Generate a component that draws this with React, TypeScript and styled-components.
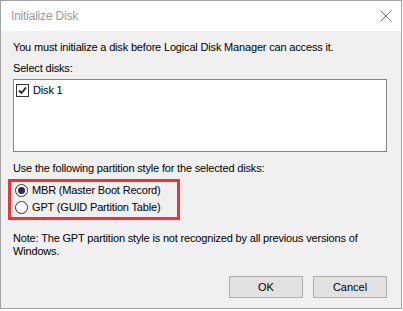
import React from "react";
import styled, { createGlobalStyle } from "styled-components";

const GlobalStyle = createGlobalStyle`
  html, body { margin: 0; padding: 0; background: #ffffff; }
  body { font-family: "Liberation Sans", Arial, sans-serif; }
`;

const Window = styled.div`
  width: 402px;
  height: 309px;
  box-sizing: border-box;
  border: 1px solid #a3a3a3;
  background: #f0f0f0;
  display: flex;
  flex-direction: column;
`;

const TitleBar = styled.div`
  height: 30px;
  flex: none;
  background: #ffffff;
  display: flex;
  align-items: center;
  justify-content: space-between;
  padding: 0 9px 0 10px;
`;

const Title = styled.span`
  font-size: 12px;
  color: #9a9a9a;
  letter-spacing: -0.2px;
`;

const Body = styled.div`
  flex: 1;
  display: flex;
  flex-direction: column;
  padding: 10px 14px 0 12px;
`;

const Text = styled.div<{ $mt?: number }>`
  font-size: 11px;
  line-height: 13px;
  color: #000;
  letter-spacing: -0.17px;
  margin-top: ${(p) => p.$mt ?? 0}px;
`;

const ListBox = styled.div`
  margin-top: 4px;
  height: 73px;
  box-sizing: border-box;
  border: 1px solid #82878f;
  background: #ffffff;
  padding: 4px 2px;
`;

const ItemRow = styled.label`
  display: flex;
  align-items: center;
  gap: 4px;
  font-size: 11px;
  line-height: 13px;
  letter-spacing: -0.17px;
`;

const CheckBox = styled.span`
  width: 11px;
  height: 11px;
  border: 1px solid #333333;
  background: #ffffff;
  display: flex;
  align-items: center;
  justify-content: center;
`;

const Highlight = styled.div`
  align-self: flex-start;
  margin: 4px 0 0 -5px;
  border: 3px solid #ec3338;
  padding: 2px 16px 3px 4px;
  display: flex;
  flex-direction: column;
  gap: 4px;
`;

const RadioRow = styled.label`
  display: flex;
  align-items: center;
  gap: 4px;
  font-size: 11px;
  line-height: 13px;
  letter-spacing: -0.17px;
`;

const Radio = styled.span<{ $on?: boolean }>`
  width: 11px;
  height: 11px;
  border-radius: 50%;
  border: 1px solid #333333;
  background: #ffffff;
  display: flex;
  align-items: center;
  justify-content: center;
  &::after {
    content: "";
    width: 7px;
    height: 7px;
    border-radius: 50%;
    background: ${(p) => (p.$on ? "#2a2a5c" : "transparent")};
  }
`;

const ButtonRow = styled.div`
  margin-top: auto;
  margin-bottom: 10px;
  display: flex;
  justify-content: flex-end;
  gap: 10px;
`;

const Button = styled.button`
  width: 74px;
  height: 22px;
  box-sizing: border-box;
  border: 1px solid #adadad;
  background: #e1e1e1;
  font-family: "Liberation Sans", Arial, sans-serif;
  font-size: 11px;
  color: #000;
  padding: 0;
`;

export default function App() {
  return (
    <>
      <GlobalStyle />
      <Window>
        <TitleBar>
          <Title>Initialize Disk</Title>
          <svg width="12" height="12" viewBox="0 0 12 12">
            <path d="M0.5 0.5 L11.5 11.5 M11.5 0.5 L0.5 11.5" stroke="#7a7a7a" strokeWidth="1" />
          </svg>
        </TitleBar>
        <Body>
          <Text>You must initialize a disk before Logical Disk Manager can access it.</Text>
          <Text $mt={8}>Select disks:</Text>
          <ListBox>
            <ItemRow>
              <CheckBox>
                <svg width="9" height="9" viewBox="0 0 9 9">
                  <path d="M1 4.5 L3.5 7 L8 1.5" stroke="#1a1a3a" strokeWidth="1.8" fill="none" />
                </svg>
              </CheckBox>
              Disk 1
            </ItemRow>
          </ListBox>
          <Text $mt={10}>Use the following partition style for the selected disks:</Text>
          <Highlight>
            <RadioRow>
              <Radio $on />
              MBR (Master Boot Record)
            </RadioRow>
            <RadioRow>
              <Radio />
              GPT (GUID Partition Table)
            </RadioRow>
          </Highlight>
          <Text $mt={12}>
            Note: The GPT partition style is not recognized by all previous versions of Windows.
          </Text>
          <ButtonRow>
            <Button>OK</Button>
            <Button>Cancel</Button>
          </ButtonRow>
        </Body>
      </Window>
    </>
  );
}
